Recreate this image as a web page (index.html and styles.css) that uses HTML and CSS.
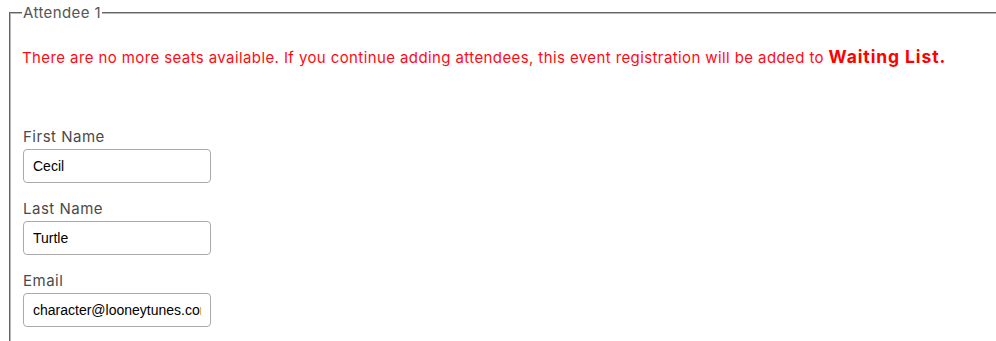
FILE: index.html
```html
<!DOCTYPE html>
<html lang="en">
<head>
  <meta charset="UTF-8">
  <title>Event Registration</title>
  <meta name="viewport" content="width=device-width, initial-scale=1.0">
  <link rel="stylesheet" href="styles.css">
</head>
<body>

<fieldset class="attendee">
  <legend>Attendee 1</legend>

  <p class="waitlist-note">
    There are no more seats available. If you continue adding attendees, this event registration will be added to <strong>Waiting List.</strong>
  </p>

  <div class="form-group">
    <label for="first_name">First Name</label>
    <input type="text" id="first_name" value="Cecil">
  </div>

  <div class="form-group">
    <label for="last_name">Last Name</label>
    <input type="text" id="last_name" value="Turtle">
  </div>

  <div class="form-group">
    <label for="email">Email</label>
    <input type="email" id="email" value="character@looneytunes.com">
  </div>
</fieldset>

</body>
</html>
```

FILE: styles.css
```css
html, body {
  height: 100%;
}

body {
  margin: 0;
  padding: 4px 0 0 8px;
  font-family: 'Inter', 'Open Sans', sans-serif;
  color: #444;
  background: #fff;
  overflow: hidden;
}

.attendee {
  margin: 0 0 0 1px;
  width: 1100px;
  padding: 0 10px 20px 11px;
  border: 2px groove #b8b8b8;
}

.attendee legend {
  padding: 0 1px;
  font-size: 15px;
  line-height: 18px;
  letter-spacing: 0.4px;
  color: #555;
}

.waitlist-note {
  margin: 24px 0 60px;
  font-size: 15px;
  letter-spacing: 0.4px;
  color: #ff0a14;
}

.waitlist-note strong {
  font-size: 17.5px;
  font-weight: 700;
  letter-spacing: 0.9px;
  color: #ff0000;
}

.form-group {
  margin-bottom: 16px;
  padding-left: 1px;
}

.form-group label {
  display: block;
  font-size: 15px;
  letter-spacing: 0.5px;
  color: #4a4a4a;
  margin-bottom: 3px;
}

.form-group input {
  box-sizing: border-box;
  width: 188px;
  height: 34px;
  padding: 6px 9px;
  border: 1px solid #aaa;
  border-radius: 4px;
  font-family: 'Liberation Sans', Arial, sans-serif;
  font-size: 14px;
  color: #000;
}
```
